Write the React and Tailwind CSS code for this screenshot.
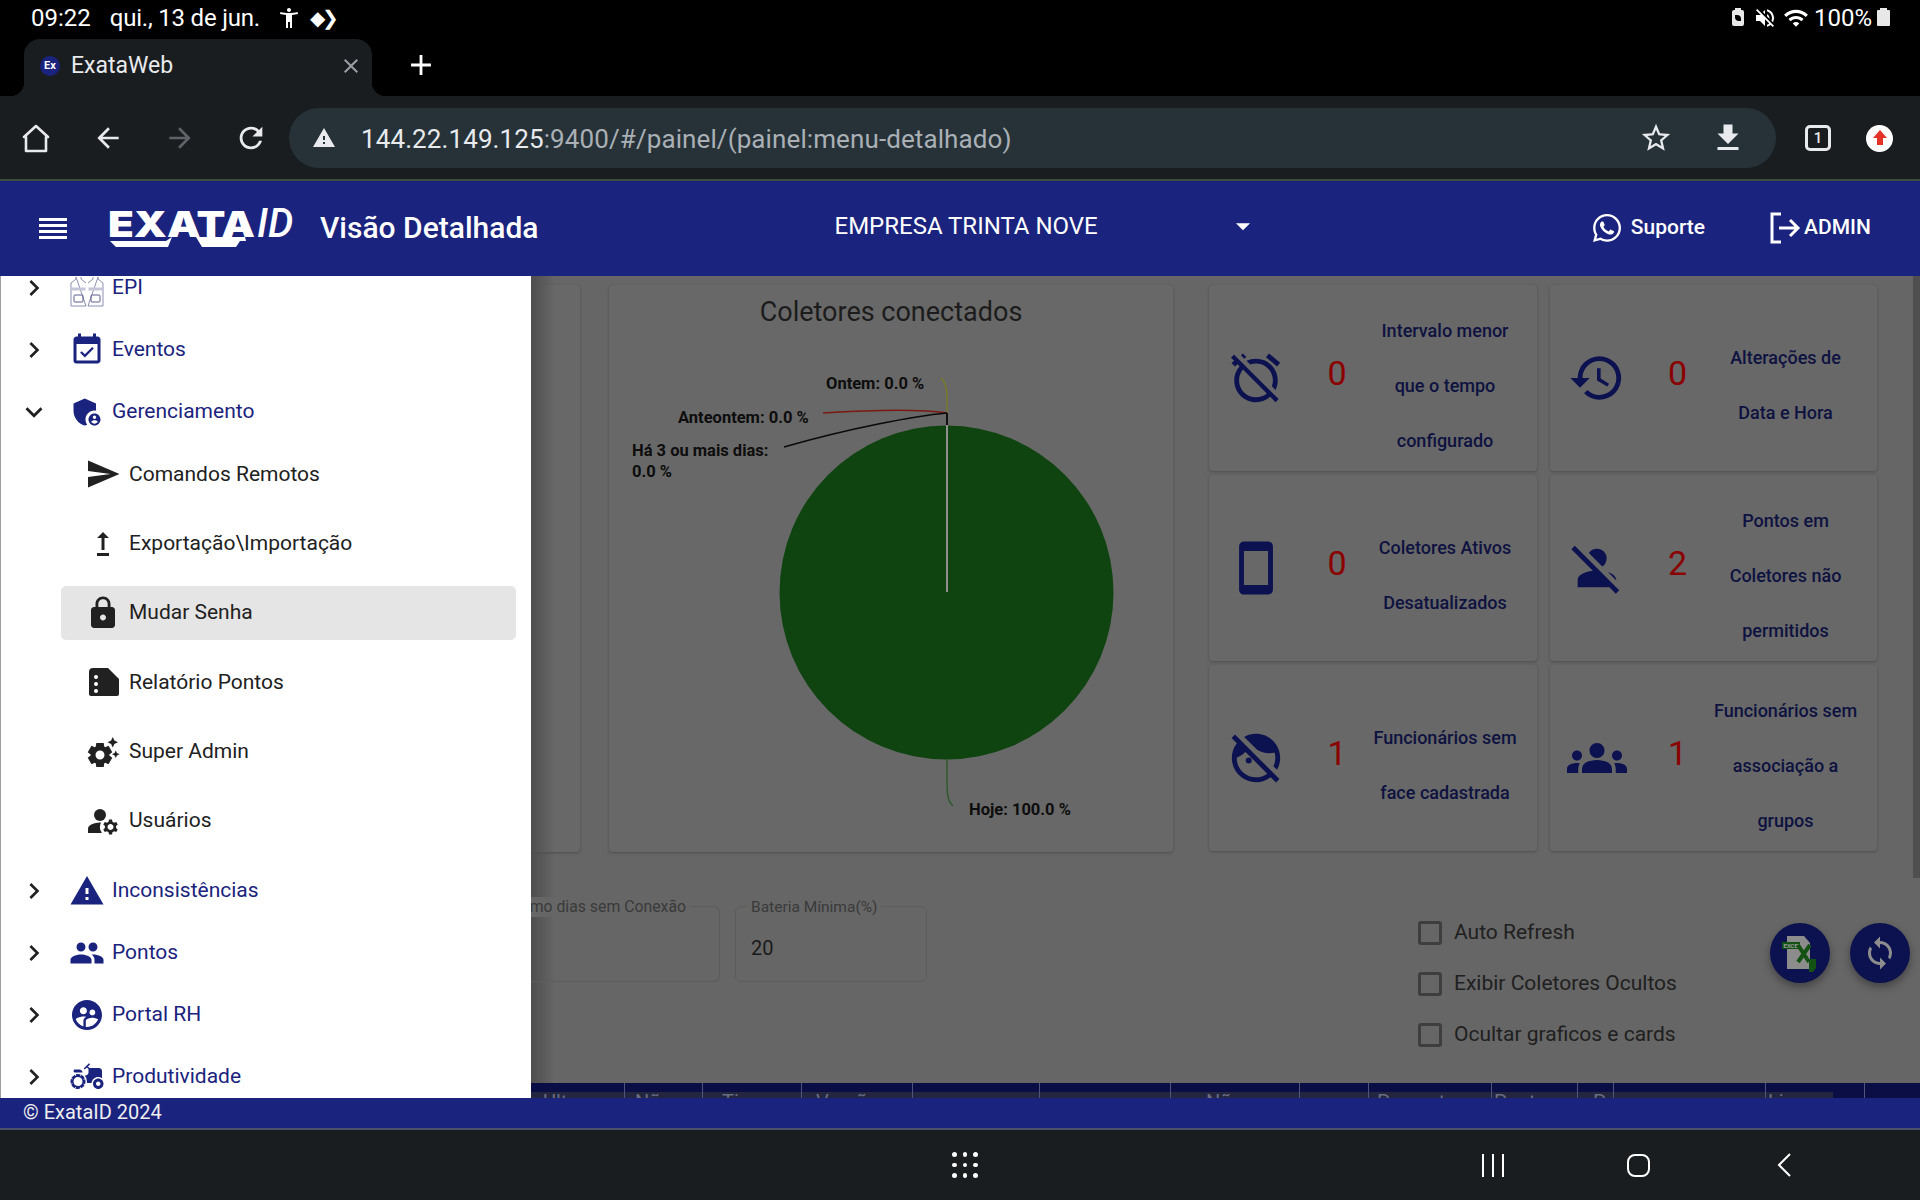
import {
  MdAccessibilityNew, MdAdminPanelSettings, MdAgriculture, MdAlarmOff, MdArrowBack, MdArrowForward,
  MdChevronRight, MdEventAvailable, MdExpandMore, MdFaceRetouchingOff, MdFileDownload,
  MdGroups, MdHistory, MdLock, MdManageAccounts, MdPeople, MdPersonOff, MdRefresh, MdSend,
  MdSettingsSuggest, MdStarBorder, MdStayCurrentPortrait, MdSupervisedUserCircle, MdSync, MdUpgrade,
  MdVolumeOff, MdWarning, MdWifi, MdClose, MdAdd, MdArrowDropDown,
} from 'react-icons/md';
import { FaWhatsapp } from 'react-icons/fa';

const EpiIcon = () => (
  <svg className="mt-[8px]" width="36" height="32" viewBox="0 0 36 32" fill="none" stroke="#8a8fb0" strokeWidth="1">
    <path d="M17 7 L12 3 V1 M7 1 V3 L2 7 V30 H17 Z" />
    <path d="M19 7 L24 3 V1 M29 1 V3 L34 7 V30 H19 Z" />
    <path d="M2.5 13 H16.5 M19.5 13 H33.5" stroke="#c4c6d8" strokeWidth="3" />
    <rect x="5" y="19" width="9" height="7" rx="1" stroke="#5a5f90" />
    <rect x="22" y="19" width="9" height="7" rx="1" stroke="#5a5f90" />
  </svg>
);

const ReportIcon = () => (
  <svg width="36" height="36" viewBox="0 0 36 36">
    <path d="M8 4 H23 L34 15 V30 a2 2 0 0 1 -2 2 H6 a2 2 0 0 1 -2 -2 V8 a4 4 0 0 1 4 -4 Z" fill="#212121" />
    <circle cx="11" cy="13" r="2" fill="#fff" />
    <circle cx="11" cy="20" r="2" fill="#fff" />
    <circle cx="11" cy="27" r="2" fill="#fff" />
  </svg>
);

const topMenu = [
  { label: 'EPI', icon: <EpiIcon /> },
  { label: 'Eventos', icon: <MdEventAvailable size={36} /> },
];

const subMenu = [
  { label: 'Comandos Remotos', icon: <MdSend size={36} /> },
  { label: 'Exportação\\Importação', icon: <MdUpgrade size={36} /> },
  { label: 'Mudar Senha', icon: <MdLock size={36} />, active: true },
  { label: 'Relatório Pontos', icon: <ReportIcon /> },
  { label: 'Super Admin', icon: <MdSettingsSuggest size={36} /> },
  { label: 'Usuários', icon: <MdManageAccounts size={36} /> },
];

const bottomMenu = [
  { label: 'Inconsistências', icon: <MdWarning size={36} /> },
  { label: 'Pontos', icon: <MdPeople size={36} /> },
  { label: 'Portal RH', icon: <MdSupervisedUserCircle size={36} /> },
  { label: 'Produtividade', icon: <MdAgriculture size={36} /> },
];

const cards = [
  { icon: <MdAlarmOff size={58} />, value: '0', lines: ['Intervalo menor', 'que o tempo', 'configurado'] },
  { icon: <MdHistory size={58} />, value: '0', lines: ['Alterações de', 'Data e Hora'] },
  { icon: <MdStayCurrentPortrait size={58} />, value: '0', lines: ['Coletores Ativos', 'Desatualizados'] },
  { icon: <MdPersonOff size={58} />, value: '2', lines: ['Pontos em', 'Coletores não', 'permitidos'] },
  { icon: <MdFaceRetouchingOff size={58} />, value: '1', lines: ['Funcionários sem', 'face cadastrada'] },
  { icon: <MdGroups size={60} />, value: '1', lines: ['Funcionários sem', 'associação a', 'grupos'] },
];

const tableCols = [
  { w: 94, pl: 12, text: 'Ult' },
  { w: 78, pl: 10, text: 'Não' },
  { w: 99, pl: 19, text: 'Tipo' },
  { w: 111, pl: 14, text: 'Versão' },
  { w: 127, pl: 0, text: '' },
  { w: 131, pl: 0, text: '' },
  { w: 129, pl: 35, text: 'Não' },
  { w: 69, pl: 0, text: '' },
  { w: 123, pl: 8, text: 'Presentes' },
  { w: 86, pl: 2, text: 'Pontos' },
  { w: 36, pl: 15, text: 'P' },
  { w: 152, pl: 0, text: '' },
  { w: 99, pl: 2, text: 'Licença' },
];

const MenuRow = ({ item, open }) => (
  <div className="h-[62px] flex items-center text-[#1a237e]">
    <div className="w-[68px] flex justify-center pr-[3px] text-[#212121]">
      {open ? <MdExpandMore size={34} /> : <MdChevronRight size={32} />}
    </div>
    <div className="w-[36px] flex justify-center">{item.icon}</div>
    <span className="ml-[7px] text-[21px]">{item.label}</span>
  </div>
);

const Sidebar = () => (
  <div className="w-[531px] shrink-0 bg-white border-l border-[#9e9e9e] overflow-hidden">
    <div className="-mt-[19px]">
      {topMenu.map((item) => (
        <MenuRow key={item.label} item={item} />
      ))}
      <MenuRow item={{ label: 'Gerenciamento', icon: <MdAdminPanelSettings size={36} /> }} open />
      <div className="flex flex-col gap-[16px] pt-[4.6px] pb-[12px]">
        {subMenu.map((item) => (
          <div
            key={item.label}
            className={`ml-[60px] w-[455px] h-[53.4px] rounded-[5px] flex items-center pl-[24px] gap-[8px] text-[#212121] ${item.active ? 'bg-[#e5e5e5]' : ''}`}
          >
            <div className="w-[36px] flex justify-center">{item.icon}</div>
            <span className="text-[21px]">{item.label}</span>
          </div>
        ))}
      </div>
      {bottomMenu.map((item) => (
        <MenuRow key={item.label} item={item} />
      ))}
    </div>
  </div>
);

const PieChart = () => (
  <svg className="w-[564px] h-[513px]" viewBox="609 339 564 513">
    <circle cx="946.5" cy="592.5" r="167" fill="#0f4411" />
    <path d="M947 425 V592" stroke="#8f8f8f" strokeWidth="2" fill="none" />
    <path d="M947 413 V425" stroke="#111" strokeWidth="2" fill="none" />
    <path d="M947 412 C947 395 948 385 941 378" stroke="#7a7a28" strokeWidth="1.5" fill="none" />
    <path d="M947 413 C920 409 870 410 823 413" stroke="#7a1a10" strokeWidth="1.5" fill="none" />
    <path d="M947 413 C915 416 850 428 784 447" stroke="#0a0a0a" strokeWidth="1.5" fill="none" />
    <path d="M947 759 C947 790 946 800 953 806" stroke="#2f5a2f" strokeWidth="1.5" fill="none" />
    <g fontSize="16.5" fontWeight="700" fill="#0d0d0d" fontFamily="Roboto, sans-serif">
      <text x="826" y="389">Ontem: 0.0 %</text>
      <text x="678" y="423">Anteontem: 0.0 %</text>
      <text x="632" y="456">Há 3 ou mais dias:</text>
      <text x="632" y="477">0.0 %</text>
      <text x="969" y="815">Hoje: 100.0 %</text>
    </g>
  </svg>
);

const InfoCard = ({ card }) => (
  <div className="bg-[#686868] rounded-[4px] shadow-[0_1px_3px_rgba(0,0,0,0.25)] flex items-center h-[186px]">
    <div className="w-[94px] flex justify-center text-[#0c1150]">{card.icon}</div>
    <div className="w-[68px] pb-[10px] text-center text-[34px] text-[#8a0000]">{card.value}</div>
    <div className="w-[148px] pt-[14px] text-center text-[18px] leading-[55px] font-medium text-[#0e1240] whitespace-nowrap">
      {card.lines.map((line) => (
        <div key={line}>{line}</div>
      ))}
    </div>
  </div>
);

const Checkbox = ({ label }) => (
  <div className="flex items-center gap-[12px] h-[24px]">
    <div className="w-[24px] h-[24px] rounded-[3px] border-[3px] border-[#3e3e3e]" />
    <span className="text-[21px] text-[#202020]">{label}</span>
  </div>
);

const Content = () => (
  <div className="relative flex-1 bg-[#666666] overflow-hidden flex flex-col">
    <div className="absolute left-0 top-0 bottom-0 w-[24px] bg-gradient-to-r from-[#4e4e4e] to-transparent" />
    <div className="absolute right-0 top-0 w-[7px] h-[602px] bg-[#4f4f4f]" />

    <div className="flex items-start pt-[9px]">
      <div className="w-[49px] h-[567px] bg-[#686868] rounded-r-[4px] shadow-[0_1px_3px_rgba(0,0,0,0.25)]" />
      <div className="ml-[29px] w-[564px] h-[567px] bg-[#686868] rounded-[4px] shadow-[0_1px_3px_rgba(0,0,0,0.25)]">
        <div className="h-[54px] pt-[10px] text-center text-[27px] leading-[34px] text-[#1c1c1c]">Coletores conectados</div>
        <PieChart />
      </div>
      <div className="ml-[36px] w-[668px] grid grid-cols-2 gap-x-[13px] gap-y-[4px]">
        {cards.map((card) => (
          <InfoCard key={card.lines[0] + card.lines[1]} card={card} />
        ))}
      </div>
    </div>

    <div className="relative flex items-start pt-[43px] h-[231px]">
      <div className="w-[189px] h-[76px] mt-[11px] relative border border-[#5c5c5c] border-l-0 rounded-r-[6px]">
        <span className="absolute -top-[10px] right-[29px] px-[4px] bg-[#666666] text-[15.8px] leading-[20px] text-[#3a3a3a] whitespace-nowrap">
          Máximo dias sem Conexão
        </span>
      </div>
      <div className="ml-[15px] w-[192px] h-[76px] mt-[11px] relative border border-[#5c5c5c] rounded-[6px]">
        <span className="absolute -top-[10px] left-[11px] px-[4px] bg-[#666666] text-[15.5px] leading-[20px] text-[#3a3a3a] whitespace-nowrap">
          Bateria Mínima(%)
        </span>
        <div className="pl-[15px] pt-[29px] text-[20px] leading-[24px] text-[#1a1a1a]">20</div>
      </div>
      <div className="ml-[491px] mt-[26px] flex flex-col gap-[27px]">
        <Checkbox label="Auto Refresh" />
        <Checkbox label="Exibir Coletores Ocultos" />
        <Checkbox label="Ocultar graficos e cards" />
      </div>
      <div className="absolute left-[1239px] top-[71px] flex gap-[20px]">
        <div className="w-[60px] h-[60px] rounded-full bg-[#0c1150] shadow-[0_4px_8px_rgba(0,0,0,0.35)] flex items-center justify-center">
          <svg width="44" height="44" viewBox="0 0 44 44">
            <path d="M9 5 H26 L32 12 V38 H9 Z" fill="#8c8c8c" />
            <rect x="4" y="11" width="18" height="7" fill="#145214" />
            <text x="5.5" y="17" fontSize="6" fontWeight="700" fill="#9a9a9a" fontFamily="Roboto, sans-serif">EXCEL</text>
            <path d="M20 14 L31 31 M32 14 L20 31" stroke="#145214" strokeWidth="4" />
            <path d="M31 28 H38 V37 L35 41 H31 Z" fill="#145214" />
          </svg>
        </div>
        <div className="w-[60px] h-[60px] rounded-full bg-[#0c1150] shadow-[0_4px_8px_rgba(0,0,0,0.35)] flex items-center justify-center text-[#8d8d8d]">
          <MdSync size={36} />
        </div>
      </div>
    </div>

    <div className="h-[15px] bg-[#0a0e45] flex items-start overflow-hidden shrink-0 relative">
      <div className="absolute left-0 top-[9px] h-[6px] w-[1302px] bg-[#24263f]" />
      {tableCols.map((col, i) => (
        <div
          key={i}
          className="relative shrink-0 h-[15px] border-r border-[#50537a] pt-[7px] text-[20px] leading-[24px] text-[#6a6c80] overflow-hidden"
          style={{ width: col.w, paddingLeft: col.pl }}
        >
          {col.text}
        </div>
      ))}
    </div>
  </div>
);

const App = () => (
  <div className="w-[1920px] h-[1200px] flex flex-col overflow-hidden bg-black font-['Roboto',sans-serif]">
    {/* status bar */}
    <div className="h-[39px] shrink-0 flex items-center pl-[31px] pr-[30px] pb-[3px] text-white text-[24px]">
      <span>09:22</span>
      <span className="ml-[19px] tracking-[-0.2px]">qui., 13 de jun.</span>
      <MdAccessibilityNew size={24} className="ml-[17px]" />
      <span className="ml-[9px] text-[20px] leading-none tracking-[-3px]">◆❯</span>
      <div className="ml-auto flex items-center">
        <div className="relative w-[12px] h-[16px] bg-[#e8e8e8] rounded-[2px] flex items-center justify-center before:absolute before:-top-[2px] before:left-[3px] before:w-[6px] before:h-[2px] before:bg-[#e8e8e8]">
          <div className="w-[6px] h-[6px] rounded-tr-[4px] rounded-bl-[4px] bg-black" />
        </div>
        <MdVolumeOff size={24} className="ml-[9px]" />
        <MdWifi size={26} className="ml-[6px]" />
        <span className="ml-[5px]">100%</span>
        <div className="relative ml-[5px] w-[13px] h-[16px] bg-[#e8e8e8] rounded-[1px] before:absolute before:-top-[2px] before:left-[3px] before:w-[7px] before:h-[2px] before:bg-[#e8e8e8]" />
      </div>
    </div>

    {/* tabs */}
    <div className="h-[57px] shrink-0 flex items-center pl-[24px] text-white">
      <div className="relative self-stretch w-[348px] bg-[#1a1d20] rounded-t-[16px] flex items-center pl-[16px] pb-[3px] before:absolute before:-left-[14px] before:bottom-0 before:w-[14px] before:h-[14px] before:bg-[radial-gradient(circle_at_0_0,transparent_14px,#1a1d20_14.5px)] after:absolute after:-right-[14px] after:bottom-0 after:w-[14px] after:h-[14px] after:bg-[radial-gradient(circle_at_100%_0,transparent_14px,#1a1d20_14.5px)]">
        <div className="w-[20px] h-[20px] rounded-full bg-[#1a237e] flex items-center justify-center text-[11px] font-bold">Ex</div>
        <span className="ml-[11px] text-[23px] text-[#e8eaed]">ExataWeb</span>
        <MdClose size={24} className="ml-auto mr-[9px] text-[#9aa0a6]" />
      </div>
      <MdAdd size={34} className="ml-[32px] mb-[5px]" />
    </div>

    {/* browser toolbar */}
    <div className="h-[85px] shrink-0 bg-[#1a1d20] border-b-2 border-[#3f4b3f] flex items-center text-[#e8eaed]">
      <svg className="ml-[18px]" width="36" height="36" viewBox="0 0 36 36" fill="none" stroke="#e8eaed" strokeWidth="2.6">
        <path d="M18 6 L30 17 H28 V31 H8 V17 H6 Z" strokeLinejoin="round" />
      </svg>
      <MdArrowBack size={32} className="ml-[38px]" />
      <MdArrowForward size={32} className="ml-[40px] text-[#5f6368]" />
      <MdRefresh size={34} className="ml-[38px]" />
      <div className="ml-[21px] w-[1487px] h-[60px] bg-[#263238] rounded-full flex items-center pl-[23px] pr-[30px]">
        <MdWarning size={24} />
        <span className="ml-[25px] pt-[3px] text-[26px] tracking-[0.1px]">
          144.22.149.125<span className="text-[#aab0b5]">:9400/#/painel/(painel:menu-detalhado)</span>
        </span>
        <MdStarBorder size={34} className="ml-auto" />
        <MdFileDownload size={36} className="ml-[37px]" />
      </div>
      <div className="ml-[29px] mt-[1px] w-[26px] h-[26px] rounded-[5px] border-[3px] border-[#e8eaed] flex items-center justify-center text-[15px] font-medium">1</div>
      <div className="ml-[35px] mt-[1px] w-[27px] h-[27px] rounded-full bg-white flex items-center justify-center">
        <svg width="16" height="18" viewBox="0 0 16 18">
          <path d="M8 1 L15 9 H11 V16 H5 V9 H1 Z" fill="#e53327" />
        </svg>
      </div>
    </div>

    {/* app header */}
    <div className="h-[95px] shrink-0 bg-[#1a237e] flex items-center text-white">
      <div className="ml-[39px] w-[28px] flex flex-col gap-[3px]">
        <div className="h-[3px] bg-white" />
        <div className="h-[3px] bg-white" />
        <div className="h-[3px] bg-white" />
        <div className="h-[3px] bg-white" />
      </div>
      <div className="relative ml-[41px] w-[188px] h-[36px] flex items-start">
        <span className="inline-block origin-left scale-x-[1.17] font-['Inter'] font-black text-[36px] leading-[26px]">EXATA</span>
        <span className="absolute left-[149px] -top-[2px] italic font-medium text-[40px] leading-[30px]">ID</span>
        <svg className="absolute left-0 top-[26px]" width="150" height="10" viewBox="0 0 150 10">
          <path d="M2 4 H58 L64 0 L60 10 H8 Z M88 0 H137 L138 4 H132 L128 10 H94 Z" fill="#fff" />
        </svg>
      </div>
      <span className="ml-[24px] -mt-[3px] text-[30px] font-medium">Visão Detalhada</span>
      <span className="ml-[296px] text-[24px] -mt-[5px]">EMPRESA TRINTA NOVE</span>
      <MdArrowDropDown size={34} className="ml-[128px] -mt-[5px]" />
      <FaWhatsapp size={32} className="ml-[331px] -mt-[2px]" />
      <span className="ml-[8px] -mt-[2px] text-[21px] font-medium">Suporte</span>
      <svg className="ml-[64px] -mt-[2px]" width="32" height="34" viewBox="0 0 32 34" fill="none" stroke="#fff" strokeWidth="3">
        <path d="M12 3 H3 V31 H12 M10 17 H29 M21 9 L29 17 L21 25" />
      </svg>
      <span className="ml-[3px] -mt-[2px] text-[21px] font-medium">ADMIN</span>
    </div>

    {/* body */}
    <div className="h-[822px] shrink-0 flex overflow-hidden">
      <Sidebar />
      <Content />
    </div>

    {/* footer */}
    <div className="h-[30px] shrink-0 bg-[#1a237e] flex items-center pl-[23px] pb-[2px] text-[20px] text-[#eeeeee]">© ExataID 2024</div>
    <div className="h-[2px] shrink-0 bg-[#4a4f6a]" />

    {/* android nav */}
    <div className="flex-1 bg-[#1a1d20] flex items-center text-white">
      <div className="ml-[952px] grid grid-cols-3 gap-[6px]">
        {[...Array(9)].map((_, i) => (
          <div key={i} className="w-[4.5px] h-[4.5px] rounded-full bg-white" />
        ))}
      </div>
      <div className="ml-[504px] flex gap-[8px]">
        <div className="w-[2px] h-[23px] bg-white" />
        <div className="w-[2px] h-[23px] bg-white" />
        <div className="w-[2px] h-[23px] bg-white" />
      </div>
      <div className="ml-[123px] w-[23px] h-[23px] rounded-[8px] border-2 border-white" />
      <svg className="ml-[127px]" width="14" height="24" viewBox="0 0 14 24" fill="none" stroke="#fff" strokeWidth="2">
        <path d="M13 1 L2 12 L13 23" />
      </svg>
    </div>
  </div>
);

export default App;
